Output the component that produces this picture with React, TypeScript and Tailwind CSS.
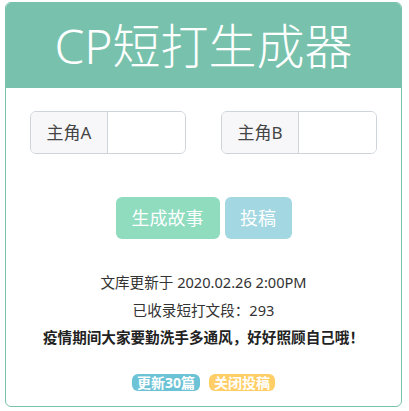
import React from 'react'

const font = { fontFamily: '"Noto Sans", "Noto Sans CJK SC", sans-serif' }

function RoleInput({ label }: { label: string }) {
  return (
    <div className="flex h-[43px] w-[156px] rounded-[6px] border border-[#ced4da] overflow-hidden">
      <span className="flex w-[77px] shrink-0 items-center justify-center bg-[#f7f7f9] border-r border-[#ced4da] text-[17px] text-[#444]">
        {label}
      </span>
      <input className="min-w-0 flex-1 bg-white outline-none" />
    </div>
  )
}

export default function App() {
  return (
    <div className="bg-white w-[409px] h-[411px] pt-[2px] pl-[5px]" style={font}>
      <div className="w-[397px] h-[405px] rounded-[6px] border border-[#78c2ad] overflow-hidden flex flex-col">
        <div className="h-[85px] bg-[#78c2ad] flex items-center justify-center text-white text-[48px] font-light leading-none">
          CP短打生成器
        </div>
        <div className="flex flex-col items-center px-[24px] pt-[23px]">
          <div className="flex w-full justify-between">
            <RoleInput label="主角A" />
            <RoleInput label="主角B" />
          </div>
          <div className="flex gap-[5px] mt-[43px]">
            <button className="h-[42px] w-[104px] rounded-[6px] bg-[#8fdcbf] text-white text-[18px]">
              生成故事
            </button>
            <button className="h-[42px] w-[67px] rounded-[6px] bg-[#a3d7e2] text-white text-[18px]">
              投稿
            </button>
          </div>
          <div className="mt-[30px] flex flex-col items-center text-[14.6px] leading-[27.5px] text-[#333]">
            <p>文库更新于 2020.02.26 2:00PM</p>
            <p>已收录短打文段：293</p>
            <p className="font-bold text-[#222]">疫情期间大家要勤洗手多通风，好好照顾自己哦！</p>
          </div>
          <div className="mt-[22px] flex gap-[9px]">
            <span className="h-[17px] px-[5px] rounded-[6px] bg-[#6cc3d5] text-white text-[14px] font-bold leading-[17px]">
              更新30篇
            </span>
            <span className="h-[17px] px-[5px] rounded-[6px] bg-[#ffce67] text-white text-[14px] font-bold leading-[17px]">
              关闭投稿
            </span>
          </div>
        </div>
      </div>
    </div>
  )
}
